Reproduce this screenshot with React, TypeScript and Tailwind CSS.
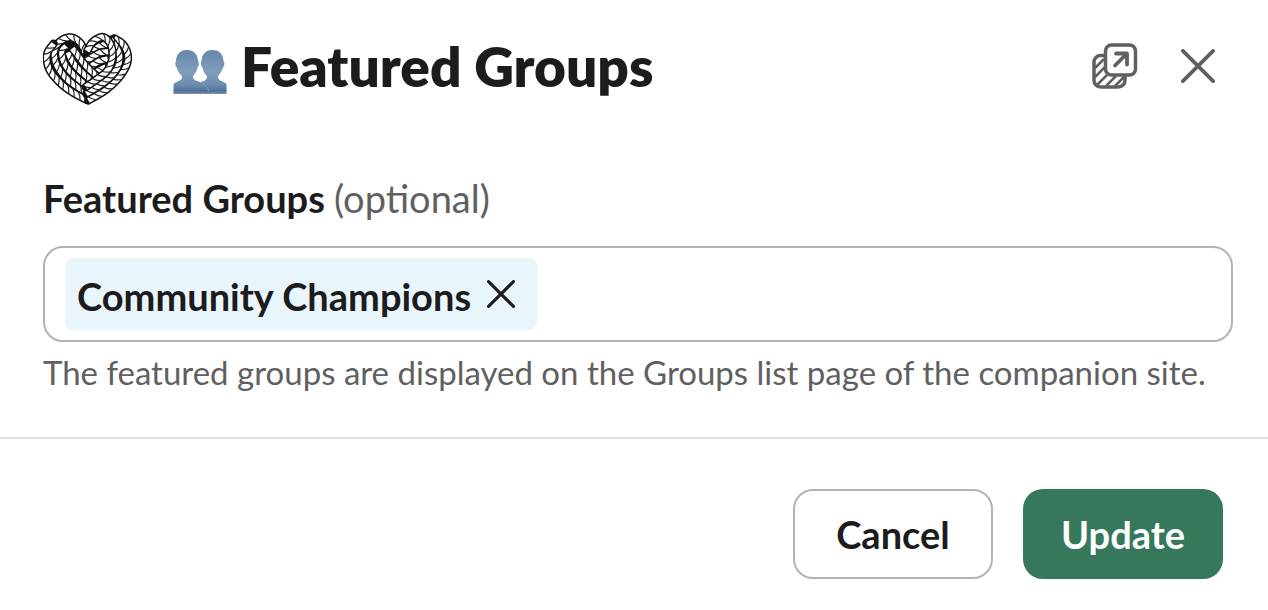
import { useState } from "react";

type Point = [number, number];

/* Strands of the rope heart, listed from back to front. */
const STRANDS: Point[][] = [
  [[216, 60], [196, 64], [174, 76], [146, 92]],
  [[218, 82], [192, 86], [170, 98], [150, 112]],
  [[216, 104], [192, 110], [172, 122], [158, 132]],
  [[210, 128], [190, 138], [174, 148]],
  [[148, 84], [134, 56], [110, 40], [84, 44], [62, 64], [56, 92], [66, 128], [94, 164], [126, 188], [154, 206]],
  [[92, 66], [80, 78], [80, 98], [90, 124], [110, 148], [138, 172], [164, 190]],
  [[98, 84], [108, 108], [126, 132], [150, 154], [178, 176]],
  [[110, 72], [124, 90], [142, 114], [162, 136], [190, 160]],
  [[54, 58], [36, 84], [34, 112], [46, 144], [78, 180], [114, 206], [156, 228]],
  [[236, 42], [262, 60], [276, 90], [272, 124], [246, 164], [206, 200], [158, 228]],
  [[224, 46], [244, 72], [252, 98], [246, 128], [224, 158], [194, 182], [152, 208]],
  [[154, 80], [172, 52], [200, 38], [220, 52], [230, 78], [228, 110], [214, 140], [182, 166], [150, 188]],
];

function smoothPath(points: Point[]): Point[] {
  const out: Point[] = [];
  for (let i = 0; i < points.length - 1; i++) {
    const a = points[Math.max(0, i - 1)];
    const b = points[i];
    const c = points[i + 1];
    const d = points[Math.min(points.length - 1, i + 2)];
    for (let s = 0; s < 24; s++) {
      const t = s / 24;
      const at = (k: 0 | 1) =>
        0.5 *
        (2 * b[k] +
          (c[k] - a[k]) * t +
          (2 * a[k] - 5 * b[k] + 4 * c[k] - d[k]) * t * t +
          (3 * b[k] - a[k] - 3 * c[k] + d[k]) * t * t * t);
      out.push([at(0), at(1)]);
    }
  }
  out.push(points[points.length - 1]);
  return out;
}

function twists(line: Point[]): string {
  let travelled = 4;
  let d = "";
  for (let i = 1; i < line.length; i++) {
    const dx = line[i][0] - line[i - 1][0];
    const dy = line[i][1] - line[i - 1][1];
    const len = Math.hypot(dx, dy) || 1;
    travelled += len;
    if (travelled < 19) continue;
    travelled -= 19;
    const tx = dx / len;
    const ty = dy / len;
    const [x, y] = line[i];
    const p = (along: number, across: number) =>
      `${(x + tx * along - ty * across).toFixed(1)} ${(y + ty * along + tx * across).toFixed(1)}`;
    d += `M${p(-8, -9)}Q${p(1, -3)} ${p(7, 9)}`;
  }
  return d;
}

function RopeHeart() {
  return (
    <svg viewBox="22 20 270 222" className="mt-1 h-[74px] w-[90px] shrink-0" fill="none" aria-hidden="true">
      <path d="M150 80C130 35 75 25 50 65C20 110 60 190 155 228C235 205 290 130 270 80C245 30 175 25 150 80Z" fill="#111" />
      {STRANDS.map((points, i) => {
        const line = smoothPath(points);
        const d = "M" + line.map(([x, y]) => `${x.toFixed(1)} ${y.toFixed(1)}`).join("L");
        return (
          <g key={i} strokeLinecap="round" strokeLinejoin="round">
            <path d={d} stroke="#111" strokeWidth="25" />
            <path d={d} stroke="#fff" strokeWidth="16" strokeLinecap="butt" />
            <path d={twists(line)} stroke="#222" strokeWidth="3.6" />
          </g>
        );
      })}
    </svg>
  );
}

function PeopleIcon() {
  return (
    <svg viewBox="0 0 54 46" className="mt-3 h-[46px] w-[54px] shrink-0" aria-hidden="true">
      <defs>
        <linearGradient id="bust" gradientUnits="userSpaceOnUse" x1="0" y1="0" x2="0" y2="45">
          <stop offset="0" stopColor="#6587ab" />
          <stop offset="0.5" stopColor="#7f9cbc" />
          <stop offset="0.8" stopColor="#6b8bb0" />
          <stop offset="0.94" stopColor="#506f98" />
          <stop offset="1" stopColor="#8295af" />
        </linearGradient>
      </defs>
      <path
        d="M39.500 1C46.500 1 50.500 5.500 50.500 12.500C52 13 51.500 17.500 50 18.500C49 22.500 46.500 25 45 27C44 33 53.500 32 53.500 36V45H27V33C30 32.500 34 32 34 27C32 25 30 22.500 29.500 18.500C27.800 17.500 27.300 13 28.500 12.500C28.500 5.500 32.500 1 39.500 1Z"
        fill="url(#bust)"
      />
      <path
        d="M14 1C21 1 25 5.500 25 12.500C26.500 13 26 17.500 24.500 18.500C24 22.500 21.500 25 20 27C19.500 33 27 32 31 34.500C34 36.500 35 39 35 42V45H0.500V36C0.500 32 10 33 9 27C7 25 4.500 22.500 3.700 18.500C2.300 17.500 1.800 13 3 12.500C3 5.500 7 1 14 1Z"
        fill="url(#bust)"
      />
      <path d="M27 33.500C31 34 34.500 37 35.500 42" fill="none" stroke="#8fa9c6" strokeWidth="0.8" />
    </svg>
  );
}

function PopOutIcon() {
  return (
    <svg viewBox="0 0 46 46" className="size-[46px]" fill="none" stroke="currentColor" strokeWidth="3.500" strokeLinecap="round" strokeLinejoin="round" aria-hidden="true">
      <path d="M12 12.500H8.500A6.500 6.500 0 0 0 2 19V37.500A6.500 6.500 0 0 0 8.500 44H26.500A6.500 6.500 0 0 0 33 37.500V34" />
      <path d="M3 25L12 16M3 34L13 24M5 42L15 32M14 43L24 33M23 43L32 34" strokeWidth="2.500" strokeLinecap="butt" />
      <rect x="13.500" y="2" width="30" height="30" rx="6" />
      <path d="M24 10.500H35V21.500M34.500 11L23 22.500" strokeWidth="3.800" />
    </svg>
  );
}

function CrossIcon({ className, weight }: { className: string; weight: number }) {
  return (
    <svg viewBox="0 0 36 36" className={className} fill="none" stroke="currentColor" strokeWidth={weight} strokeLinecap="round" aria-hidden="true">
      <path d="M2 2L34 34M34 2L2 34" />
    </svg>
  );
}

export default function App() {
  const [groups, setGroups] = useState(["Community Champions"]);

  return (
    <main className="min-h-screen bg-white font-['Lato',sans-serif] text-[#1d1c1d]">
      <form onSubmit={(e) => e.preventDefault()}>
        <header className="flex items-center pt-[26px] pr-[53px] pl-[43px]">
          <RopeHeart />
          <h1 className="ml-10 flex h-20 flex-1 items-center gap-3.5 text-[55px] leading-[80px] font-extrabold">
            <PeopleIcon />
            Featured Groups
          </h1>
          <div className="flex items-center gap-[43px] text-[#616061]">
            <button type="button" aria-label="Open in new window">
              <PopOutIcon />
            </button>
            <button type="button" aria-label="Close">
              <CrossIcon className="size-[34px]" weight={4} />
            </button>
          </div>
        </header>

        <section className="px-[43px] pt-[68px] pb-[43px]">
          <label htmlFor="groups" className="block text-[38px] leading-12 font-bold">
            Featured Groups <span className="font-normal text-[#616061]">(optional)</span>
          </label>
          <div className="-mr-2 mt-6 flex h-24 items-center rounded-[20px] border-2 border-[#b3b3b3] px-5">
            {groups.map((group) => (
              <span key={group} className="flex h-[72px] items-center gap-4 rounded-lg bg-[#e8f5fb] pr-[22px] pl-3 text-[38px] font-bold whitespace-nowrap">
                <span className="pt-1">{group}</span>
                <button type="button" aria-label={`Remove ${group}`} onClick={() => setGroups(groups.filter((g) => g !== group))}>
                  <CrossIcon className="size-7" weight={4} />
                </button>
              </span>
            ))}
            <input id="groups" type="text" aria-describedby="groups-hint" className="h-full min-w-0 flex-1 px-3 text-[38px] outline-none" />
          </div>
          <p id="groups-hint" className="mt-2 text-[33px] leading-[44px] text-[#616061]">
            The featured groups are displayed on the Groups list page of the companion site.
          </p>
        </section>

        <footer className="flex justify-end gap-[30px] border-t-2 border-[#dddddd] pt-[50px] pr-[45px] pb-7 text-[38px] font-bold">
          <button type="button" className="h-[90px] w-[200px] rounded-[20px] border-2 border-[#b3b3b3]">
            Cancel
          </button>
          <button type="submit" className="h-[90px] w-[200px] rounded-[20px] bg-[#35785b] text-white">
            Update
          </button>
        </footer>
      </form>
    </main>
  );
}
